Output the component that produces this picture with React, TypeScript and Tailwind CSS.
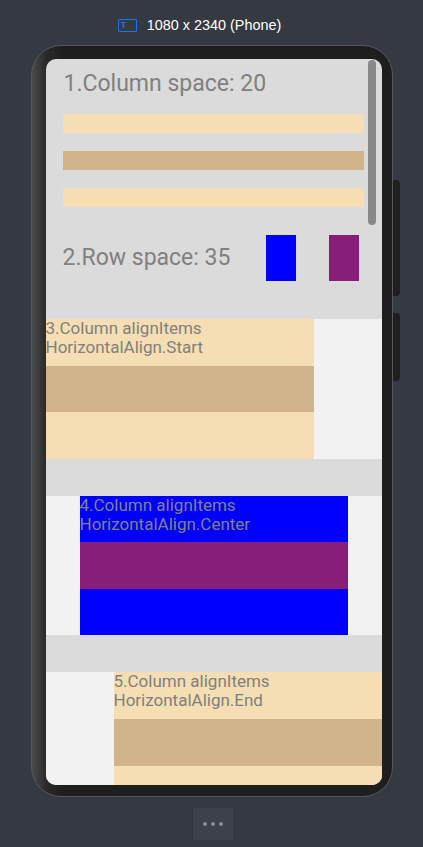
const wheat = 'bg-[#f5deb3]';

export default function App() {
  return (
    <div className="min-h-[847px] w-[423px] bg-[#353942] flex flex-col items-center font-['Liberation_Sans',sans-serif]">
      {/* device label */}
      <div className="flex items-center gap-[10px] h-[16px] mt-[17px] ml-[-24px]">
        <div className="w-[19px] h-[13px] border-[1.5px] border-[#1f73e8] rounded-[1px] flex items-center pl-[2px]">
          <span className="text-[9px] leading-none text-[#1f73e8] font-bold">T</span>
        </div>
        <span className="text-[14.4px] leading-none text-white">1080 x 2340 (Phone)</span>
      </div>

      {/* phone */}
      <div className="relative mt-[12px] ml-[1px] w-[362px] h-[752px] rounded-[30px] bg-[linear-gradient(90deg,#4b4b4b_0px,#2a2a2a_14px,#1e1e1e_30px)] border-[1.5px] border-[#55575c] pl-[13.5px] pt-[12.5px] pr-[9.5px] pb-[10.5px]">
        <div className="absolute right-[-8px] top-[134px] w-[7px] h-[116px] rounded-r-[4px] bg-[#1f1f1f]" />
        <div className="absolute right-[-8px] top-[267px] w-[7px] h-[68px] rounded-r-[4px] bg-[#1f1f1f]" />

        <div className="relative w-[336px] h-[726px] rounded-[10px] overflow-hidden bg-[#dcdbdb] font-['Roboto',sans-serif] text-[#808080]">
          <div className="absolute right-[6px] top-[1px] w-[8px] h-[165px] rounded-full bg-[#888888]" />

          {/* 1 */}
          <div className="pl-[17px] pr-[18px] pt-[11px]">
            <div className="text-[23px] leading-[27px] ml-[1px]">1.Column space: 20</div>
            <div className="flex flex-col gap-[18px] mt-[17px]">
              <div className={`h-[19px] ${wheat}`} />
              <div className="h-[19px] bg-[#d2b48c]" />
              <div className={`h-[19px] ${wheat}`} />
            </div>
          </div>

          {/* 2 */}
          <div className="flex items-center pl-[17px] mt-[28px] h-[46px]">
            <div className="text-[23px] leading-[27px] w-[203px]">2.Row space: 35</div>
            <div className="flex gap-[33px]">
              <div className="w-[30px] h-[46px] bg-[#0000ff]" />
              <div className="w-[30px] h-[46px] bg-[#871f78]" />
            </div>
          </div>

          {/* 3 */}
          <div className="mt-[38px] bg-[#f2f2f2] flex flex-col items-start">
            <div className={`w-[268px] h-[47px] ${wheat} text-[17px] leading-[19.5px]`}>
              3.Column alignItems<br />HorizontalAlign.Start
            </div>
            <div className="w-[268px] h-[46px] bg-[#d2b48c]" />
            <div className={`w-[268px] h-[47px] ${wheat}`} />
          </div>

          {/* 4 */}
          <div className="mt-[37px] bg-[#f2f2f2] flex flex-col items-center">
            <div className="w-[268px] h-[46px] bg-[#0000ff] text-[17px] leading-[19.5px]">
              4.Column alignItems<br />HorizontalAlign.Center
            </div>
            <div className="w-[268px] h-[47px] bg-[#871f78]" />
            <div className="w-[268px] h-[46px] bg-[#0000ff]" />
          </div>

          {/* 5 */}
          <div className="mt-[37px] bg-[#f2f2f2] flex flex-col items-end">
            <div className={`w-[268px] h-[47px] ${wheat} text-[17px] leading-[19.5px]`}>
              5.Column alignItems<br />HorizontalAlign.End
            </div>
            <div className="w-[268px] h-[47px] bg-[#d2b48c]" />
            <div className={`w-[268px] h-[47px] ${wheat}`} />
          </div>
        </div>
      </div>

      {/* more button */}
      <div className="mt-[11px] ml-[3px] w-[40px] h-[32px] bg-[#3d414a] flex items-center justify-center gap-[4px]">
        <span className="w-[4px] h-[4px] rounded-full bg-[#8a8d93]" />
        <span className="w-[4px] h-[4px] rounded-full bg-[#8a8d93]" />
        <span className="w-[4px] h-[4px] rounded-full bg-[#8a8d93]" />
      </div>
    </div>
  );
}
